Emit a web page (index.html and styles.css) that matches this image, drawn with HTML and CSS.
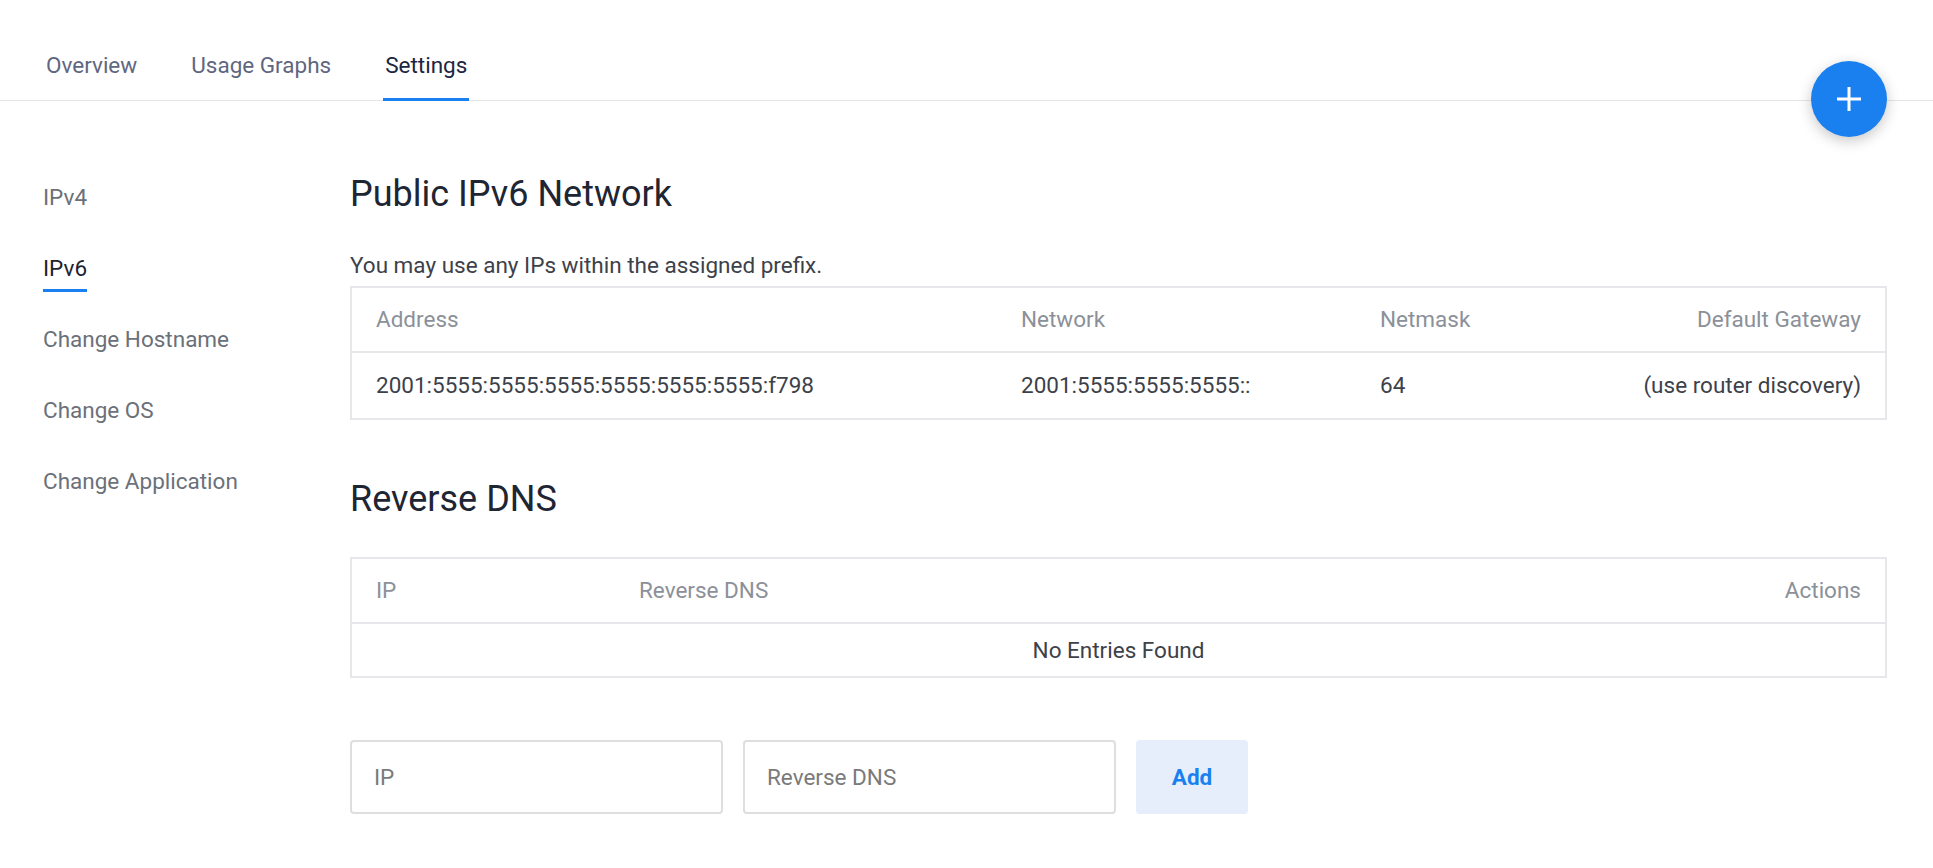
FILE: index.html
```html
<!DOCTYPE html>
<html lang="en">
<head>
    <meta charset="UTF-8">
    <meta name="viewport" content="width=device-width, initial-scale=1.0">
    <title>Settings - IPv6</title>
    <link rel="stylesheet" href="styles.css">
</head>
<body>
    <div class="tabs">
        <a class="tab">Overview</a>
        <a class="tab">Usage Graphs</a>
        <a class="tab active">Settings</a>
    </div>

    <button class="fab" aria-label="Add">
        <svg width="26" height="26" viewBox="0 0 26 26">
            <path d="M13 1v24M1 13h24" stroke="#fff" stroke-width="3" fill="none"/>
        </svg>
    </button>

    <div class="page">
        <div class="side-nav">
            <a class="side-link">IPv4</a>
            <a class="side-link active">IPv6</a>
            <a class="side-link">Change Hostname</a>
            <a class="side-link">Change OS</a>
            <a class="side-link">Change Application</a>
        </div>

        <div class="content">
            <h2>Public IPv6 Network</h2>
            <p class="note">You may use any IPs within the assigned prefix.</p>
            <table class="data-table network-table">
                <colgroup>
                    <col style="width: 645px">
                    <col style="width: 359px">
                    <col style="width: 240px">
                    <col>
                </colgroup>
                <thead>
                    <tr>
                        <th>Address</th>
                        <th>Network</th>
                        <th>Netmask</th>
                        <th class="right">Default Gateway</th>
                    </tr>
                </thead>
                <tbody>
                    <tr>
                        <td>2001:5555:5555:5555:5555:5555:5555:f798</td>
                        <td>2001:5555:5555:5555::</td>
                        <td>64</td>
                        <td class="right">(use router discovery)</td>
                    </tr>
                </tbody>
            </table>

            <h2 class="section-gap">Reverse DNS</h2>
            <table class="data-table dns-table">
                <colgroup>
                    <col style="width: 263px">
                    <col>
                    <col>
                </colgroup>
                <thead>
                    <tr>
                        <th>IP</th>
                        <th>Reverse DNS</th>
                        <th class="right">Actions</th>
                    </tr>
                </thead>
                <tbody>
                    <tr>
                        <td colspan="3" class="empty">No Entries Found</td>
                    </tr>
                </tbody>
            </table>

            <div class="add-form">
                <input type="text" placeholder="IP">
                <input type="text" placeholder="Reverse DNS">
                <button class="add-btn">Add</button>
            </div>
        </div>
    </div>
</body>
</html>
```

FILE: styles.css
```css
body {
    margin: 0;
    background-color: #FFFFFF;
    font-family: Roboto, 'Liberation Sans', sans-serif;
    font-size: 22.5px;
    color: #3d4149;
}

.tabs {
    display: flex;
    align-items: flex-end;
    gap: 50px;
    height: 100px;
    padding-left: 44px;
    border-bottom: 1px solid #e4e5e8;
}

.tab {
    padding: 0 2px 20px;
    line-height: 26px;
    color: #5f6680;
    border-bottom: 3px solid transparent;
    margin-bottom: -1px;
    cursor: pointer;
}

.tab.active {
    color: #1c2541;
    border-bottom-color: #1a80f0;
}

.fab {
    position: absolute;
    top: 61px;
    right: 46px;
    width: 76px;
    height: 76px;
    border-radius: 50%;
    border: none;
    background-color: #1a80f0;
    box-shadow: 0 4px 14px rgba(0, 0, 0, 0.22);
    display: flex;
    align-items: center;
    justify-content: center;
    cursor: pointer;
}

.page {
    display: flex;
}

.side-nav {
    width: 307px;
    flex-shrink: 0;
    padding: 75px 0 0 43px;
    display: flex;
    flex-direction: column;
    align-items: flex-start;
    gap: 26px;
}

.side-link {
    padding: 8px 0;
    line-height: 26px;
    color: #6b7079;
    border-bottom: 3px solid transparent;
    cursor: pointer;
}

.side-link.active {
    color: #1d2330;
    border-bottom-color: #1a80f0;
}

.content {
    flex: 1;
    padding: 72px 46px 0 0;
}

h2 {
    margin: 0 0 38px;
    font-size: 36px;
    line-height: 42px;
    font-weight: 400;
    color: #1e2533;
}

h2.section-gap {
    margin-top: 58px;
    margin-bottom: 37px;
}

.note {
    margin: 0 0 8px;
    line-height: 25px;
    color: #3d4149;
}

.data-table {
    width: 100%;
    table-layout: fixed;
    border-collapse: separate;
    border-spacing: 0;
    border: 2px solid #e6e7eb;
}

.data-table th {
    padding: 19px 24px;
    line-height: 25px;
    font-weight: 400;
    text-align: left;
    color: #8b9099;
    border-bottom: 2px solid #e6e7eb;
}

.data-table td {
    padding: 20px 24px;
    line-height: 25px;
    color: #3d4149;
}

.data-table .right {
    text-align: right;
}

.dns-table td.empty {
    padding: 14px 24px 13px;
    text-align: center;
}

.add-form {
    display: flex;
    gap: 20px;
    margin-top: 62px;
}

.add-form input {
    box-sizing: border-box;
    width: 373px;
    height: 74px;
    padding: 0 22px;
    border: 2px solid #dedede;
    border-radius: 4px;
    font-family: Roboto, 'Liberation Sans', sans-serif;
    font-size: 22.5px;
    color: #3d4149;
}

.add-form input::placeholder {
    color: #7a7a7a;
}

.add-btn {
    width: 112px;
    height: 74px;
    border: none;
    border-radius: 4px;
    background-color: #e6eefb;
    color: #1a80f0;
    font-family: Roboto, 'Liberation Sans', sans-serif;
    font-size: 22.5px;
    font-weight: 700;
    cursor: pointer;
}
```
